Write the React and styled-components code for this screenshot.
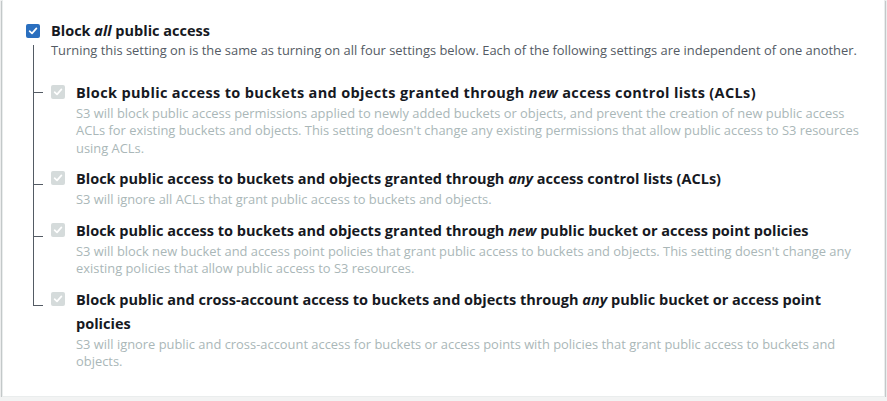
import React from 'react';
import styled, { createGlobalStyle } from 'styled-components';

const GlobalStyle = createGlobalStyle`
  html, body {
    margin: 0;
    padding: 0;
    background: #f2f3f3;
  }
  body {
    font-family: 'Open Sans', 'Noto Sans', Arial, sans-serif;
    color: #16191f;
  }
`;

const Card = styled.section`
  margin: 0 2px;
  background: #ffffff;
  border: 1px solid #eaeded;
  border-top: none;
  box-shadow: 0 1px 1px 0 rgba(0, 28, 36, 0.3),
    1px 1px 1px 0 rgba(0, 28, 36, 0.15), -1px 1px 1px 0 rgba(0, 28, 36, 0.15);
  padding: 19px 20px 25px 23px;
`;

const Row = styled.div`
  display: grid;
  grid-template-columns: 14px 1fr;
  column-gap: 11px;
  align-items: start;
`;

const Box = styled.span`
  width: 14px;
  height: 14px;
  margin-top: ${(p) => (p.$disabled ? 4 : 5)}px;
  border-radius: 2px;
  display: flex;
  align-items: center;
  justify-content: center;
  background: ${(p) => (p.$disabled ? '#d5dbdb' : '#2a6fbf')};
  box-sizing: border-box;
`;

const Title = styled.div`
  font-size: 14.5px;
  font-weight: 700;
  line-height: 24px;
  color: #16191f;
  letter-spacing: ${(p) => p.$spread || 0}px;
  em {
    font-weight: 700;
  }
`;

const Desc = styled.div`
  font-size: 12.9px;
  line-height: 17.5px;
  margin-top: ${(p) => (p.$disabled ? 0 : -1)}px;
  color: ${(p) => (p.$disabled ? '#aab7b8' : '#545b64')};
`;

const Tree = styled.div`
  margin-top: 21px;
  display: flex;
  flex-direction: column;
  gap: 10px;
  padding-left: 25px;
`;

const Item = styled.div`
  position: relative;
  &::before {
    content: '';
    position: absolute;
    left: -18px;
    top: ${(p) => -p.$reach}px;
    height: ${(p) => p.$reach + p.$branch}px;
    border-left: 1px solid #545b64;
  }
  &::after {
    content: '';
    position: absolute;
    left: -18px;
    top: ${(p) => p.$branch}px;
    width: 10px;
    border-top: 1px solid #545b64;
  }
`;

const Check = () => (
  <svg width="10" height="10" viewBox="0 0 10 10">
    <path
      d="M1.6 5.2 L4 7.4 L8.4 2.4"
      fill="none"
      stroke="#fff"
      strokeWidth="1.7"
      strokeLinecap="round"
      strokeLinejoin="round"
    />
  </svg>
);

const settings = [
  {
    id: 1,
    title: (
      <>
        Block public access to buckets and objects granted through <em>new</em> access
        control lists (ACLs)
      </>
    ),
    desc: "S3 will block public access permissions applied to newly added buckets or objects, and prevent the creation of new public access ACLs for existing buckets and objects. This setting doesn't change any existing permissions that allow public access to S3 resources using ACLs.",
    reach: 36,
    branch: 11,
    spread: 0.35,
  },
  {
    id: 2,
    title: (
      <>
        Block public access to buckets and objects granted through <em>any</em> access
        control lists (ACLs)
      </>
    ),
    desc: 'S3 will ignore all ACLs that grant public access to buckets and objects.',
    reach: 80,
    branch: 17,
  },
  {
    id: 3,
    title: (
      <>
        Block public access to buckets and objects granted through <em>new</em> public
        bucket or access point policies
      </>
    ),
    desc: "S3 will block new bucket and access point policies that grant public access to buckets and objects. This setting doesn't change any existing policies that allow public access to S3 resources.",
    reach: 40,
    branch: 17,
  },
  {
    id: 4,
    title: (
      <>
        Block public and cross-account access to buckets and objects through <em>any</em>{' '}
        public bucket or access point policies
      </>
    ),
    desc: 'S3 will ignore public and cross-account access for buckets or access points with policies that grant public access to buckets and objects.',
    reach: 60,
    branch: 17,
  },
];

const App = () => {
  return (
    <>
      <GlobalStyle />
      <Card>
        <Row>
          <Box>
            <Check />
          </Box>
          <div>
            <Title>
              Block <em>all</em> public access
            </Title>
            <Desc>
              Turning this setting on is the same as turning on all four settings below.
              Each of the following settings are independent of one another.
            </Desc>
          </div>
        </Row>
        <Tree>
          {settings.map((s) => (
            <Item key={s.id} $reach={s.reach} $branch={s.branch}>
              <Row>
                <Box $disabled>
                  <Check />
                </Box>
                <div>
                  <Title $spread={s.spread}>{s.title}</Title>
                  <Desc $disabled>{s.desc}</Desc>
                </div>
              </Row>
            </Item>
          ))}
        </Tree>
      </Card>
    </>
  );
};

export default App;
